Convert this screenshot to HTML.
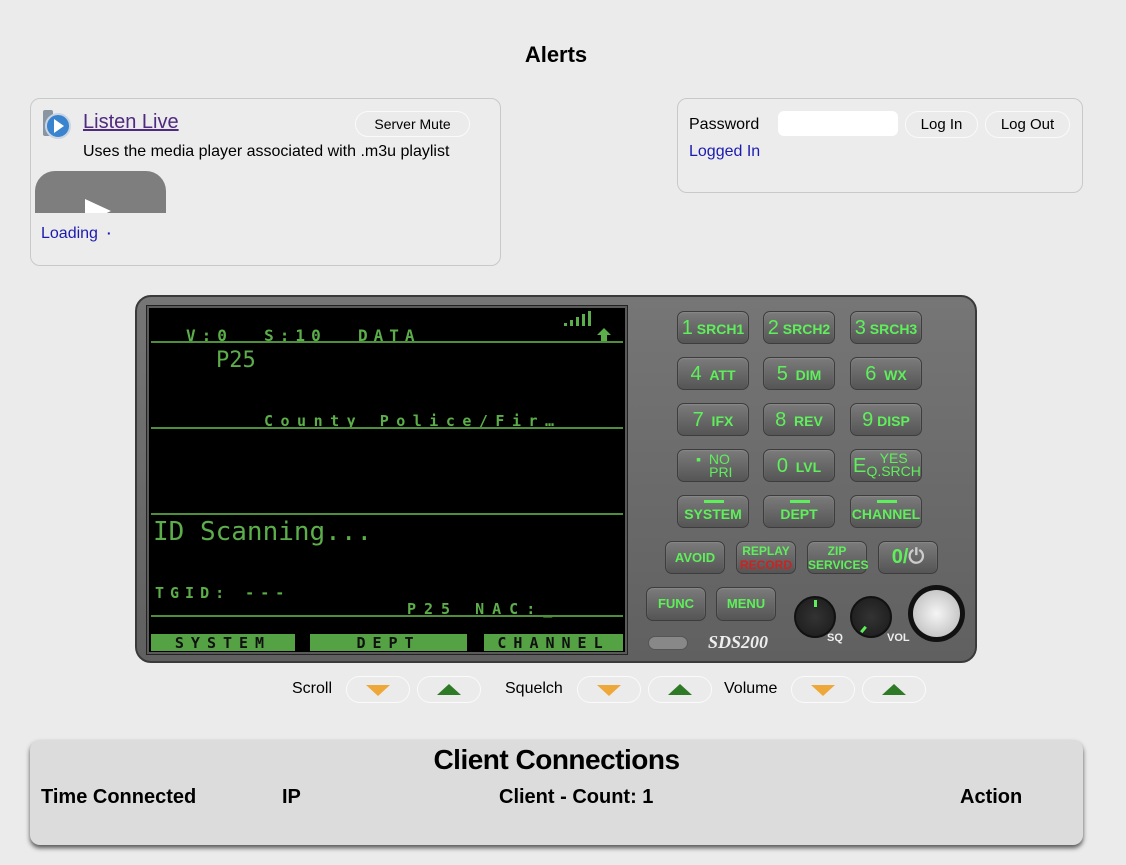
<!DOCTYPE html>
<html><head><style>
*{box-sizing:border-box;margin:0;padding:0}
body{width:1126px;height:865px;background:#ebebeb;font-family:"Liberation Sans",sans-serif;position:relative;overflow:hidden;color:#000}
.a{position:absolute}
.box{position:absolute;border:1.5px solid #c9c9c9;border-radius:10px;background:#ececec}
.pill{position:absolute;border:1.5px solid #fafafa;border-radius:14px;background:#ebebeb;font-size:15px;text-align:center}
.scr{font-family:"DejaVu Sans Mono","Liberation Mono",monospace;color:#5cae4a;position:absolute;white-space:pre}
.hl{position:absolute;left:151px;width:472px;height:2px;background:#4e8f3c}
.bar{position:absolute;top:634px;height:17px;background:#55a244;font-family:"DejaVu Sans Mono",monospace;font-weight:bold;font-size:15px;letter-spacing:7px;text-align:center;line-height:18px;color:#111}
.k{position:absolute;width:72px;height:33px;border-radius:7px;background:linear-gradient(#7b7b7b,#555);border:1px solid #3d3d3d;box-shadow:0 1px 1px #888 inset;color:#5ef05a;font-weight:bold;font-size:14px;text-align:center;line-height:32px;white-space:nowrap}
.k b{font-size:20px;font-weight:normal}
.k.s{width:60px;font-size:13px}
.knob{position:absolute;border-radius:50%;background:radial-gradient(#333,#1a1a1a);border:2px solid #111}
.tri{position:absolute;width:0;height:0;border-left:12px solid transparent;border-right:12px solid transparent}
.cb{position:absolute;font-size:20px;font-weight:bold;top:786px}
</style></head><body>
<div class="a" style="left:0;width:1112px;top:42px;text-align:center;font-size:22px;font-weight:bold">Alerts</div>

<div class="box" style="left:30px;top:98px;width:471px;height:168px"></div>
<svg class="a" style="left:41px;top:107px" width="32" height="34"><rect x="2" y="3" width="10" height="26" rx="2" fill="#8a95a2"/><circle cx="17" cy="19" r="12" fill="#3a83cf" stroke="#c9d5e2" stroke-width="2"/><path d="M13 12 L23 19 L13 26Z" fill="#fff"/></svg>
<div class="a" style="left:83px;top:111px;font-size:20px;color:#4f2a80;text-decoration:underline">Listen Live</div>
<div class="pill" style="left:355px;top:111px;width:115px;height:26px;line-height:25px;font-size:14px">Server Mute</div>
<div class="a" style="left:83px;top:143px;font-size:16px">Uses the media player associated with .m3u playlist</div>
<div class="a" style="left:35px;top:171px;width:131px;height:42px;background:#7e7e7e;border-radius:20px 20px 0 0;overflow:hidden"><div class="a" style="left:50px;top:28px;width:0;height:0;border-top:12px solid transparent;border-bottom:12px solid transparent;border-left:26px solid #fff"></div></div>
<div class="a" style="left:41px;top:225px;font-size:16px;color:#1b1bb0">Loading &nbsp;<span style="font-size:14px;font-weight:bold">·</span></div>

<div class="box" style="left:677px;top:98px;width:406px;height:95px"></div>
<div class="a" style="left:689px;top:116px;font-size:16px">Password</div>
<div class="a" style="left:778px;top:111px;width:120px;height:25px;background:#fff;border-radius:6px"></div>
<div class="pill" style="left:905px;top:111px;width:73px;height:27px;line-height:26px">Log In</div>
<div class="pill" style="left:985px;top:111px;width:85px;height:27px;line-height:26px">Log Out</div>
<div class="a" style="left:689px;top:143px;font-size:16px;color:#1b1bb0">Logged In</div>

<!-- radio -->
<div class="a" style="left:135px;top:295px;width:842px;height:368px;border-radius:16px;background:linear-gradient(#767676,#606060);border:2px solid #3a3a3a"></div>
<div class="a" style="left:147px;top:306px;width:480px;height:348px;background:#000;border:2px solid #5a5a5a;box-shadow:0 0 0 1px #222"></div>
<div class="scr" style="left:186px;top:326px;font-size:16px;font-weight:bold;letter-spacing:6px">V:0  S:10  DATA</div>
<svg class="a" style="left:562px;top:309px" width="50" height="34"><rect x="2" y="14" width="3" height="3" fill="#5cae4a"/><rect x="8" y="11" width="3" height="6" fill="#5cae4a"/><rect x="14" y="8" width="3" height="9" fill="#5cae4a"/><rect x="20" y="5" width="3" height="12" fill="#5cae4a"/><rect x="26" y="2" width="3" height="15" fill="#5cae4a"/><path d="M42 19 L49 26 L45 26 L45 32 L39 32 L39 26 L35 26Z" fill="#5cae4a"/></svg>
<div class="hl" style="top:341px"></div>
<div class="scr" style="left:216px;top:348px;font-size:22px">P25</div>
<div class="scr" style="left:264px;top:412px;font-size:15px;font-weight:bold;letter-spacing:7.5px">County Police/Fir…</div>
<div class="hl" style="top:427px"></div>
<div class="hl" style="top:513px"></div>
<div class="scr" style="left:153px;top:517px;font-size:26px">ID Scanning...</div>
<div class="scr" style="left:155px;top:584px;font-size:15px;font-weight:bold;letter-spacing:6px">TGID: ---</div>
<div class="scr" style="left:407px;top:600px;font-size:15px;font-weight:bold;letter-spacing:8px">P25 NAC:_</div>
<div class="hl" style="top:615px"></div>
<div class="bar" style="left:151px;width:144px">SYSTEM</div>
<div class="bar" style="left:310px;width:157px">DEPT</div>
<div class="bar" style="left:484px;width:139px">CHANNEL</div>

<div class="k" style="left:677px;top:311px"><b>1</b> SRCH1</div>
<div class="k" style="left:763px;top:311px"><b>2</b> SRCH2</div>
<div class="k" style="left:850px;top:311px"><b>3</b> SRCH3</div>
<div class="k" style="left:677px;top:357px"><b>4</b> &nbsp;ATT</div>
<div class="k" style="left:763px;top:357px"><b>5</b> &nbsp;DIM</div>
<div class="k" style="left:850px;top:357px"><b>6</b> &nbsp;WX</div>
<div class="k" style="left:677px;top:403px"><b>7</b> &nbsp;IFX</div>
<div class="k" style="left:763px;top:403px"><b>8</b> &nbsp;REV</div>
<div class="k" style="left:850px;top:403px"><b>9</b> DISP</div>
<div class="k" style="left:677px;top:449px;line-height:13px;padding-top:3px;font-weight:normal">▪ &nbsp;NO<br>&nbsp;&nbsp;&nbsp;&nbsp;PRI</div>
<div class="k" style="left:763px;top:449px"><b>0</b> &nbsp;LVL</div>
<div class="k" style="left:850px;top:449px;line-height:13px;text-align:left;padding-left:2px"><b style="float:left;line-height:32px">E</b><div style="padding-top:2px;text-align:center;font-weight:normal">YES<br>Q.SRCH</div></div>
<div class="k" style="left:677px;top:495px;line-height:36px">SYSTEM<div class="a" style="left:26px;top:4px;width:20px;height:3px;background:#5ef05a"></div></div>
<div class="k" style="left:763px;top:495px;line-height:36px">DEPT<div class="a" style="left:26px;top:4px;width:20px;height:3px;background:#5ef05a"></div></div>
<div class="k" style="left:850px;top:495px;line-height:36px">CHANNEL<div class="a" style="left:26px;top:4px;width:20px;height:3px;background:#5ef05a"></div></div>
<div class="k s" style="left:665px;top:541px">AVOID</div>
<div class="k s" style="left:736px;top:541px;line-height:14px;padding-top:2px;font-size:12px">REPLAY<br><span style="color:#c22">RECORD</span></div>
<div class="k s" style="left:807px;top:541px;line-height:14px;padding-top:2px;font-size:12px">ZIP<br>SERVICES</div>
<div class="k s" style="left:878px;top:541px;font-size:20px;line-height:31px">0/<span style="color:#ccc">⏻</span></div>
<div class="k s" style="left:646px;top:587px;height:34px">FUNC</div>
<div class="k s" style="left:716px;top:587px;height:34px">MENU</div>
<div class="a" style="left:648px;top:636px;width:40px;height:14px;border-radius:7px;background:#888;border:1px solid #555"></div>
<div class="a" style="left:708px;top:632px;font-size:18px;font-weight:bold;font-style:italic;color:#eee;font-family:'Liberation Serif',serif">SDS200</div>
<div class="knob" style="left:794px;top:596px;width:42px;height:42px"><div class="a" style="left:18px;top:2px;width:3px;height:7px;background:#5ef05a"></div></div>
<div class="knob" style="left:850px;top:596px;width:42px;height:42px"><div class="a" style="left:10px;top:28px;width:3px;height:7px;background:#5ef05a;transform:rotate(40deg)"></div></div>
<div class="a" style="left:827px;top:632px;font-size:11px;font-weight:bold;color:#eee">SQ</div>
<div class="a" style="left:887px;top:632px;font-size:11px;font-weight:bold;color:#eee">VOL</div>
<div class="a" style="left:908px;top:585px;width:57px;height:57px;border-radius:50%;background:#111"><div class="a" style="left:5px;top:5px;width:47px;height:47px;border-radius:50%;background:radial-gradient(#f5f5f5,#c8c8c8 70%,#999)"></div></div>

<!-- controls -->
<div class="a" style="left:292px;top:680px;font-size:16px">Scroll</div>
<div class="a" style="left:505px;top:680px;font-size:16px">Squelch</div>
<div class="a" style="left:724px;top:680px;font-size:16px">Volume</div>
<div class="pill" style="left:346px;top:676px;width:64px;height:27px"><div class="tri" style="left:19px;top:8px;border-top:11px solid #eea83a"></div></div>
<div class="pill" style="left:417px;top:676px;width:64px;height:27px"><div class="tri" style="left:19px;top:7px;border-bottom:11px solid #2f7a27"></div></div>
<div class="pill" style="left:577px;top:676px;width:64px;height:27px"><div class="tri" style="left:19px;top:8px;border-top:11px solid #eea83a"></div></div>
<div class="pill" style="left:648px;top:676px;width:64px;height:27px"><div class="tri" style="left:19px;top:7px;border-bottom:11px solid #2f7a27"></div></div>
<div class="pill" style="left:791px;top:676px;width:64px;height:27px"><div class="tri" style="left:19px;top:8px;border-top:11px solid #eea83a"></div></div>
<div class="pill" style="left:862px;top:676px;width:64px;height:27px"><div class="tri" style="left:19px;top:7px;border-bottom:11px solid #2f7a27"></div></div>

<!-- clients -->
<div class="a" style="left:30px;top:740px;width:1053px;height:105px;background:#dcdcdc;border-radius:10px;box-shadow:0 3px 5px #555"></div>
<div class="a" style="left:30px;top:744px;width:1053px;text-align:center;font-size:28px;font-weight:bold;letter-spacing:-0.5px">Client Connections</div>
<div class="cb" style="left:41px">Time Connected</div>
<div class="cb" style="left:282px">IP</div>
<div class="cb" style="left:499px">Client - Count: 1</div>
<div class="cb" style="left:960px">Action</div>
</body></html>
